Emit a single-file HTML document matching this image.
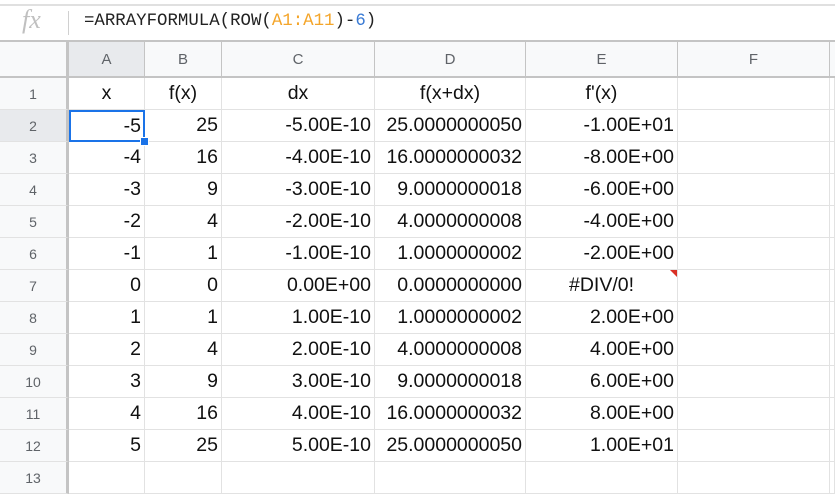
<!DOCTYPE html>
<html><head><style>
*{margin:0;padding:0;box-sizing:border-box}
body{width:835px;height:498px;overflow:hidden;background:#fff;font-family:"Liberation Sans",Arial,sans-serif;position:relative}
.topline{position:absolute;left:0;top:4px;width:835px;height:2px;background:#e0e0e0}
.fx{position:absolute;left:22px;top:5px;font-family:"Liberation Serif",serif;font-style:italic;font-size:26px;color:#c0c0c0}
.sep{position:absolute;left:68px;top:11px;width:1px;height:24px;background:#d0d0d0}
.formula{position:absolute;left:84px;top:12px;font-family:"Liberation Mono",monospace;font-size:17.4px;color:#222;letter-spacing:0}
.o{color:#f4a52a}.b{color:#3a7bd5}
.grid{position:absolute;left:0;top:40px;display:grid;grid-template-columns:69px 76px 77px 153px 151px 152px 152px 5px;grid-template-rows:36px repeat(13,32px);border-top:2px solid #c4c4c4}
.grid div{border-right:1px solid #e2e2e2;border-bottom:1px solid #e2e2e2;font-size:19.5px;color:#111;display:flex;align-items:center;justify-content:flex-end;padding-right:3px;white-space:nowrap;position:relative}
.grid .h{background:#f8f9fa;color:#5f6368;font-size:15px;justify-content:center;padding:0;border-right:1px solid #c4c4c4;border-bottom:2px solid #c4c4c4}
.grid .r{background:#f8f9fa;color:#5f6368;font-size:14px;justify-content:center;padding:0;border-right:3px solid #c4c4c4}
.grid .sel{background:#e8eaed}
.grid .c{justify-content:center;padding:0}
.grid .cur{border:2px solid #1a73e8;padding-right:2px;overflow:visible;z-index:3}
.handle{position:absolute;right:-6px;bottom:-6px;width:9px;height:9px;background:#1a73e8;border:1px solid #fff;z-index:5;display:block}
.tri{position:absolute;right:0;top:0;width:0;height:0;border-top:7px solid #d93025;border-left:7px solid transparent}
</style></head><body>
<div class="topline"></div>
<div class="fx">fx</div>
<div class="sep"></div>
<div class="formula">=ARRAYFORMULA(ROW(<span class="o">A1:A11</span>)-<span class="b">6</span>)</div>
<div class="grid">
<div class="h" style="border-right:3px solid #c4c4c4"></div><div class="h sel">A</div><div class="h">B</div><div class="h">C</div><div class="h">D</div><div class="h">E</div><div class="h">F</div><div class="h" style="border-right:none"></div>
<div class="r">1</div><div class="c">x</div><div class="c">f(x)</div><div class="c">dx</div><div class="c">f(x+dx)</div><div class="c">f'(x)</div><div></div><div></div>
<div class="r sel">2</div><div class="cur">-5<span class="handle"></span></div><div>25</div><div>-5.00E-10</div><div>25.0000000050</div><div>-1.00E+01</div><div></div><div></div>
<div class="r">3</div><div>-4</div><div>16</div><div>-4.00E-10</div><div>16.0000000032</div><div>-8.00E+00</div><div></div><div></div>
<div class="r">4</div><div>-3</div><div>9</div><div>-3.00E-10</div><div>9.0000000018</div><div>-6.00E+00</div><div></div><div></div>
<div class="r">5</div><div>-2</div><div>4</div><div>-2.00E-10</div><div>4.0000000008</div><div>-4.00E+00</div><div></div><div></div>
<div class="r">6</div><div>-1</div><div>1</div><div>-1.00E-10</div><div>1.0000000002</div><div>-2.00E+00</div><div></div><div></div>
<div class="r">7</div><div>0</div><div>0</div><div>0.00E+00</div><div>0.0000000000</div><div class="c">#DIV/0!<span class="tri"></span></div><div></div><div></div>
<div class="r">8</div><div>1</div><div>1</div><div>1.00E-10</div><div>1.0000000002</div><div>2.00E+00</div><div></div><div></div>
<div class="r">9</div><div>2</div><div>4</div><div>2.00E-10</div><div>4.0000000008</div><div>4.00E+00</div><div></div><div></div>
<div class="r">10</div><div>3</div><div>9</div><div>3.00E-10</div><div>9.0000000018</div><div>6.00E+00</div><div></div><div></div>
<div class="r">11</div><div>4</div><div>16</div><div>4.00E-10</div><div>16.0000000032</div><div>8.00E+00</div><div></div><div></div>
<div class="r">12</div><div>5</div><div>25</div><div>5.00E-10</div><div>25.0000000050</div><div>1.00E+01</div><div></div><div></div>
<div class="r">13</div><div></div><div></div><div></div><div></div><div></div><div></div><div></div>
</div>
</body></html>
